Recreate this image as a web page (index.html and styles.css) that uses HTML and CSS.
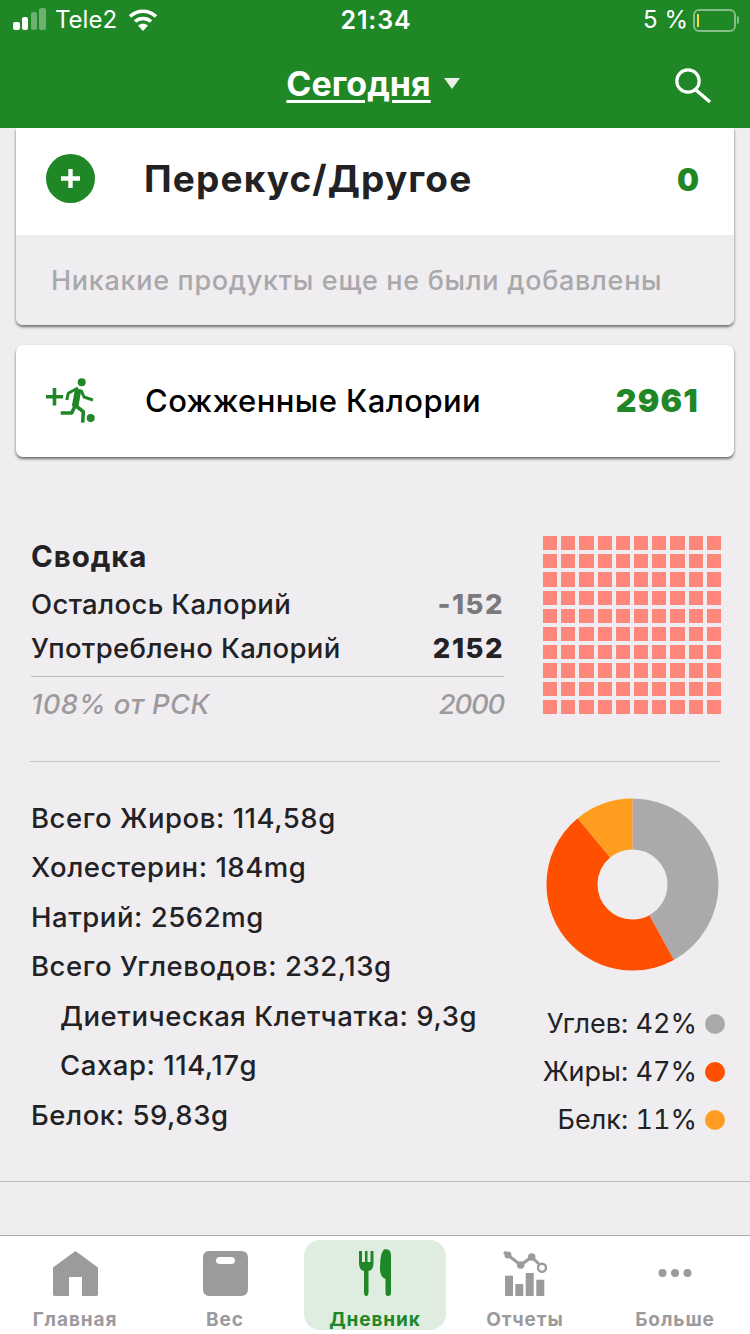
FILE: index.html
```html
<!DOCTYPE html>
<html lang="ru">
<head>
<meta charset="utf-8">
<title>Дневник</title>
<link rel="stylesheet" href="styles.css">
</head>
<body>
<div class="app">
  <header class="top">
    <div class="status">
      <div class="status-left">
        <svg class="signal" width="34" height="22" viewBox="0 0 34 22"><rect x="0" y="14" width="7" height="8" rx="2" fill="#fff"/><rect x="9" y="9" width="6" height="13" rx="2" fill="#fff"/><rect x="18" y="4" width="6" height="18" rx="2" fill="#fff" opacity=".35"/><rect x="26" y="0" width="7" height="22" rx="2" fill="#fff" opacity=".35"/></svg>
        <span class="carrier">Tele2</span>
        <svg class="wifi" width="30" height="23" viewBox="0 0 30 23"><path d="M2 8.5C9.5 1.5 20.5 1.5 28 8.5" fill="none" stroke="#fff" stroke-width="3.6"/><path d="M7 13.5C11.5 9.5 18.5 9.5 23 13.5" fill="none" stroke="#fff" stroke-width="3.6"/><path d="M10 17.5 15 23 20 17.5C17 15 13 15 10 17.5Z" fill="#fff"/></svg>
      </div>
      <div class="clock">21:34</div>
      <div class="status-right">
        <span class="percent">5 %</span>
        <div class="battery"><span class="battery-level"></span></div>
        <span class="battery-nub"></span>
      </div>
    </div>
    <nav class="navbar">
      <span></span>
      <div class="nav-title"><span class="nav-label">Сегодня</span>
        <svg width="16" height="11" viewBox="0 0 16 11"><path d="M0 0H16L8 11Z" fill="#e8f0e8"/></svg>
      </div>
      <svg class="search" width="38" height="36" viewBox="0 0 38 36"><circle cx="14" cy="14" r="11.2" fill="none" stroke="#fff" stroke-width="3.2"/><path d="M22 23 36 35" stroke="#fff" stroke-width="3.4" fill="none"/></svg>
    </nav>
  </header>

  <main class="content">
    <section class="card">
      <div class="meal-head">
        <svg class="plus-icon" width="49" height="49" viewBox="0 0 49 49"><circle cx="24.5" cy="24.5" r="24.5" fill="#1f8726"/><path d="M24.5 15V34M15 24.5H34" stroke="#fff" stroke-width="4.4"/></svg>
        <h2 class="meal-title">Перекус/Другое</h2>
        <span class="meal-value">0</span>
      </div>
      <div class="meal-empty">Никакие продукты еще не были добавлены</div>
    </section>

    <section class="card burned">
      <svg class="run-icon" width="50" height="48" viewBox="0 0 50 48">
        <g fill="#1f8726"><circle cx="35.7" cy="6.3" r="4"/><circle cx="44.7" cy="42" r="4"/></g>
        <g fill="none" stroke="#1f8726" stroke-linejoin="round">
          <path d="M0 20.7H17M8.5 12V29.5" stroke-width="3.6"/>
          <path d="M32.3 13 29 30.7" stroke-width="6.5"/>
          <path d="M32 12 22.3 17.3 20.7 24M35 14 38 21 47 24" stroke-width="3"/>
          <path d="M29 30 25.7 37H14.7M30 30 37.3 35.7 36.7 46.7" stroke-width="3.6"/>
        </g>
      </svg>
      <span class="burned-title">Сожженные Калории</span>
      <span class="burned-value">2961</span>
    </section>

    <section class="summary">
      <div class="summary-text">
        <h3 class="summary-title">Сводка</h3>
        <div class="summary-row"><span>Осталось Калорий</span><span class="num-muted">-152</span></div>
        <div class="summary-row"><span>Употреблено Калорий</span><span class="num-strong">2152</span></div>
        <div class="summary-row goal"><span>108% от РСК</span><span class="goal-value">2000</span></div>
      </div>
      <div class="waffle">
        <i></i><i></i><i></i><i></i><i></i><i></i><i></i><i></i><i></i><i></i>
        <i></i><i></i><i></i><i></i><i></i><i></i><i></i><i></i><i></i><i></i>
        <i></i><i></i><i></i><i></i><i></i><i></i><i></i><i></i><i></i><i></i>
        <i></i><i></i><i></i><i></i><i></i><i></i><i></i><i></i><i></i><i></i>
        <i></i><i></i><i></i><i></i><i></i><i></i><i></i><i></i><i></i><i></i>
        <i></i><i></i><i></i><i></i><i></i><i></i><i></i><i></i><i></i><i></i>
        <i></i><i></i><i></i><i></i><i></i><i></i><i></i><i></i><i></i><i></i>
        <i></i><i></i><i></i><i></i><i></i><i></i><i></i><i></i><i></i><i></i>
        <i></i><i></i><i></i><i></i><i></i><i></i><i></i><i></i><i></i><i></i>
        <i></i><i></i><i></i><i></i><i></i><i></i><i></i><i></i><i></i><i></i>
      </div>
    </section>

    <hr class="divider">

    <section class="nutrition">
      <ul class="nutrients">
        <li>Всего Жиров: 114,58g</li>
        <li>Холестерин: 184mg</li>
        <li>Натрий: 2562mg</li>
        <li>Всего Углеводов: 232,13g</li>
        <li class="sub">Диетическая Клетчатка: 9,3g</li>
        <li class="sub">Сахар: 114,17g</li>
        <li>Белок: 59,83g</li>
      </ul>
      <div class="macros">
        <svg class="donut" width="173" height="173" viewBox="0 0 173 173">
          <g fill="none" stroke-width="51" transform="rotate(-90 86.5 86.5)">
            <circle cx="86.5" cy="86.5" r="60.5" pathLength="100" stroke="#aba9ac" stroke-dasharray="42 58"/>
            <circle cx="86.5" cy="86.5" r="60.5" pathLength="100" stroke="#fe5000" stroke-dasharray="47 53" stroke-dashoffset="-42"/>
            <circle cx="86.5" cy="86.5" r="60.5" pathLength="100" stroke="#fe9d1f" stroke-dasharray="11 89" stroke-dashoffset="-89"/>
          </g>
        </svg>
        <ul class="legend">
          <li>Углев: 42%<span class="dot dot-carb"></span></li>
          <li>Жиры: 47%<span class="dot dot-fat"></span></li>
          <li>Белк: 11%<span class="dot dot-protein"></span></li>
        </ul>
      </div>
    </section>
  </main>

  <footer class="tabs">
    <div class="tab">
      <svg class="tab-icon" width="46" height="46" viewBox="0 0 46 46"><path d="M23.500 0 46 16.500V43.500Q46 45 44 45H30V26H17V45H3Q1 45 1 43.500V16.500Z" fill="#9c9a9d"/></svg>
      <span class="tab-label">Главная</span>
    </div>
    <div class="tab">
      <svg class="tab-icon" width="46" height="46" viewBox="0 0 46 46"><path fill-rule="evenodd" d="M7 0H39Q46 0 46 7V38Q46 45 39 45H7Q1 45 1 38V7Q1 0 7 0ZM18 6Q14 6 14 9.500 14 13 18 13H29Q33 13 33 9.500 33 6 29 6Z" fill="#9c9a9d"/></svg>
      <span class="tab-label">Вес</span>
    </div>
    <div class="tab active">
      <svg class="tab-icon tab-icon-tall" width="34" height="48" viewBox="0 0 34 48"><path d="M1 2H4V13H7V2H9.500V13H12.500V2H15.500V14Q15.500 21 10.500 22V43Q10.500 47 8.250 47 6 47 6 43V22Q1 21 1 14Z" fill="#1f8726"/><path d="M27 0Q33 0 33 6V44Q33 47 30 47 27.500 47 27.500 44V30Q22 28 22 20 22 2 27 0Z" fill="#1f8726"/></svg>
      <span class="tab-label">Дневник</span>
    </div>
    <div class="tab">
      <svg class="tab-icon" width="44" height="46" viewBox="0 0 44 46"><g fill="#9c9a9d"><rect x="2" y="24.700" width="8" height="20.300"/><rect x="12.300" y="33" width="8" height="12"/><rect x="22.700" y="22" width="8" height="23"/><rect x="33.300" y="28.700" width="8" height="16.300"/><circle cx="5" cy="4" r="3.500"/><circle cx="17.700" cy="14" r="3.800"/><circle cx="28.700" cy="6" r="3.800"/></g><path d="M1 1 17.700 14 28.700 6 36 13" fill="none" stroke="#9c9a9d" stroke-width="3"/><circle cx="39" cy="16.700" r="4" fill="none" stroke="#9c9a9d" stroke-width="2.400"/></svg>
      <span class="tab-label">Отчеты</span>
    </div>
    <div class="tab">
      <svg class="tab-icon" width="34" height="46" viewBox="0 0 34 46"><g fill="#9c9a9d"><circle cx="4.500" cy="22" r="4"/><circle cx="17" cy="22" r="4"/><circle cx="29.500" cy="22" r="4"/></g></svg>
      <span class="tab-label">Больше</span>
    </div>
  </footer>
</div>
</body>
</html>
```
FILE: styles.css
```css
* { box-sizing: border-box; }
html, body { margin: 0; padding: 0; }
body { background: #efedf0; font-family: Inter, "Liberation Sans", sans-serif; color: #222124; }
h2, h3, ul { margin: 0; padding: 0; }
ul { list-style: none; }

.app { width: 750px; height: 1334px; display: flex; flex-direction: column; overflow: hidden; }

/* Header */
.top { flex: none; height: 128px; background: #1f8726; color: #fff; }
.status { height: 40px; display: grid; grid-template-columns: 1fr auto 1fr; align-items: center; padding: 0 11px 0 13px; }
.status-left { display: flex; align-items: center; }
.signal { margin-top: -2px; }
.carrier { font-size: 24px; margin-left: 8px; line-height: 30px; }
.wifi { margin-left: 11px; margin-top: -1px; }
.clock { font-size: 25px; font-weight: 600; line-height: 30px; letter-spacing: .9px; }
.status-right { display: flex; align-items: center; justify-content: flex-end; }
.percent { font-size: 24px; line-height: 30px; margin-right: 5px; }
.battery { width: 43px; height: 23px; border: 2px solid rgba(255,255,255,.45); border-radius: 6px; padding: 3px 2px; }
.battery-level { display: block; width: 2px; height: 100%; background: #f7dd3a; }
.battery-nub { width: 2px; height: 8px; margin-left: 1px; background: rgba(255,255,255,.45); border-radius: 0 2px 2px 0; }

.navbar { height: 88px; display: grid; grid-template-columns: 1fr auto 1fr; align-items: center; padding: 0 38px; }
.nav-title { display: flex; align-items: center; gap: 13px; margin-right: 4px; }
.nav-label { font-size: 34px; font-weight: 700; line-height: 40px; text-decoration: underline; text-decoration-thickness: 3px; text-underline-offset: 4px; }
.nav-title svg { margin-top: -2px; }
.search { justify-self: end; margin-top: 1px; }

/* Cards */
.content { flex: 1; min-height: 0; }
.card { margin: 0 16px; background: #fff; border-radius: 0 0 7px 7px; box-shadow: 0 2px 3px rgba(0,0,0,.55); overflow: hidden; }
.meal-head { height: 107px; padding: 0 35px 5px 30px; display: flex; align-items: center; }
.plus-icon { flex: none; margin-top: -2px; }
.meal-title { flex: 1; margin-left: 49px; font-size: 37px; line-height: 44px; font-weight: 700; letter-spacing: 1.15px; }
.meal-value { color: #1f8726; font-size: 31px; font-weight: 900; }
.meal-empty { height: 90px; background: #efedf0; padding-left: 35px; display: flex; align-items: center; color: #a9a8ab; font-size: 27px; font-weight: 500; letter-spacing: .7px; }

.burned { margin-top: 20px; height: 112px; border-radius: 7px; padding: 0 35px 2px 30px; display: flex; align-items: center; }
.run-icon { flex: none; }
.burned-title { flex: 1; margin-left: 49px; font-size: 31px; font-weight: 500; letter-spacing: .4px; color: #000; }
.burned-value { color: #1f8726; font-size: 32px; font-weight: 900; letter-spacing: 1.2px; }

/* Summary */
.summary { margin-top: 79px; padding: 0 29px 0 31px; display: flex; justify-content: space-between; }
.summary-text { width: 473px; }
.summary-title { height: 42px; line-height: 40px; font-size: 29.5px; font-weight: 700; letter-spacing: .9px; margin-bottom: 5px; }
.summary-row { height: 44px; padding-bottom: 2px; display: flex; justify-content: space-between; align-items: center; font-size: 27.5px; font-weight: 500; letter-spacing: .35px; }
.num-muted { color: #7a797c; font-weight: 800; letter-spacing: 1.5px; }
.num-strong { font-weight: 800; letter-spacing: 1.5px; }
.goal { height: 56px; margin-top: 5px; border-top: 1px solid #bdbcbf; color: #9c9a9d; font-style: italic; }
.goal-value { letter-spacing: -1.2px; }
.waffle { width: 178px; height: 178px; display: grid; grid-template-columns: repeat(10, 1fr); grid-template-rows: repeat(10, 1fr); gap: 4px; }
.waffle i { display: block; background: #fe867a; }

.divider { margin: 29px 30px 0; border: 0; border-top: 1px solid #c4c3c6; height: 1px; }

/* Nutrition */
.nutrition { height: 420px; display: flex; justify-content: space-between; border-bottom: 1px solid #bdbcbf; }
.nutrients { padding: 32px 0 0 31px; }
.nutrients li { height: 49.5px; padding-bottom: 2px; display: flex; align-items: center; font-size: 27.5px; font-weight: 500; letter-spacing: .55px; }
.nutrients .sub { padding-left: 29px; }
.macros { padding: 36px 25px 0 0; display: flex; flex-direction: column; align-items: flex-end; }
.donut { display: block; margin-right: 6px; }
.legend { margin-top: 28px; }
.legend li { height: 48px; display: flex; align-items: center; justify-content: flex-end; gap: 8px; font-size: 27px; font-variant-numeric: tabular-nums; }
.dot { width: 20px; height: 20px; margin-top: 2px; border-radius: 50%; }
.dot-carb { background: #aba9ac; }
.dot-fat { background: #fe5000; }
.dot-protein { background: #fe9d1f; }

/* Tabs */
.tabs { flex: none; height: 99px; background: #fff; border-top: 1px solid #a9a8ab; display: grid; grid-template-columns: repeat(5, 1fr); padding-top: 4px; }
.tab { height: 90px; margin: 0 4px; padding-top: 11px; display: flex; flex-direction: column; align-items: center; border-radius: 16px; color: #9c9a9d; }
.tab-icon { flex: none; display: block; }
.tab-icon-tall { margin-top: -2px; }
.tab-label { margin-top: 11px; font-size: 19px; line-height: 24px; font-weight: 700; letter-spacing: .9px; }
.active { background: #deede0; color: #1f8726; }
```
